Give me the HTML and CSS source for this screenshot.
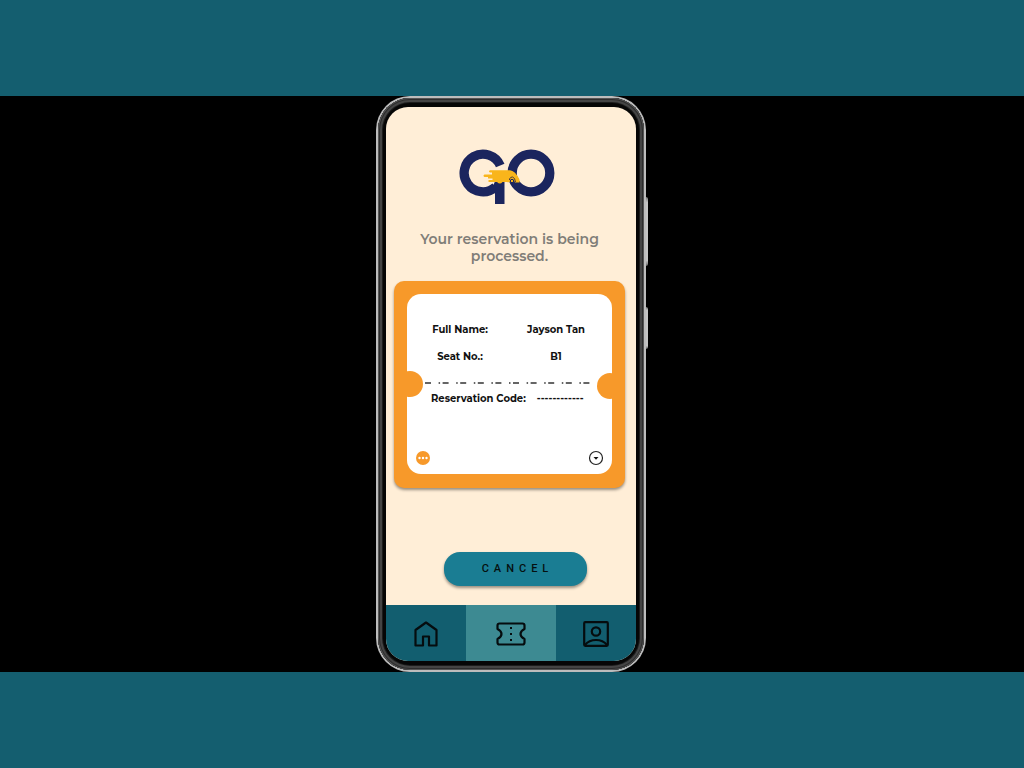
FILE: index.html
```html
<!DOCTYPE html>
<html lang="en">
<head>
<meta charset="utf-8">
<meta name="viewport" content="width=device-width, initial-scale=1">
<title>Reservation</title>
<link rel="stylesheet" href="styles.css">
</head>
<body>
<main class="stage">
  <div class="device">
    <span class="side-key side-key-volume"></span>
    <span class="side-key side-key-power"></span>
    <div class="rim"><div class="bezel"><div class="screen">
      <div class="content">
        <svg class="logo" viewBox="0 0 96 56" role="img" aria-label="GO">
          <g fill="none" stroke="#1b255e" stroke-width="9.300">
            <path d="M41.200 16.500A18.800 18.800 0 1 0 36.500 38"/>
            <circle cx="72" cy="24" r="18.800"/>
          </g>
          <path fill="#1b255e" d="M30 40Q35 37 36 32H45.500V55H36V42.500Q33 45 29 46z"/>
          <path fill="#f9b51b" d="M31 21.300H51Q56 22.500 58.500 27Q61 30 60.500 33.500H56Q55 30 52 31Q51 34 48 33H43.500Q41 36 38 33H30Q28.500 32 30 31H33.500V29.500H29V28H25.500Q23.500 26.500 25.500 25.500H33V23.500H31Q29 22.400 31 21.300z"/>
          <path fill="none" stroke="#4a3d3a" stroke-width="1" d="M50.500 31V30Q51.500 27.800 53.500 28Q56 28.500 56.500 33"/>
          <circle cx="53" cy="32" r="1.700" fill="#f9b51b" stroke="#1b255e" stroke-width="1"/>
        </svg>
        <h1 class="status">Your reservation is being processed.</h1>
        <section class="ticket">
          <div class="ticket-body">
            <span class="notch notch-left"></span>
            <span class="notch notch-right"></span>
            <dl class="details">
              <dt>Full Name:</dt><dd>Jayson Tan</dd>
              <dt>Seat No.:</dt><dd>B1</dd>
            </dl>
            <svg class="perforation" viewBox="0 0 172 2" aria-hidden="true"><path d="M0 1H172" stroke="#333" stroke-width="1.300" stroke-dasharray="6 7.600 1.500 2.500"/></svg>
            <dl class="code"><dt>Reservation Code:</dt><dd>------------</dd></dl>
            <div class="ticket-actions">
              <button type="button" class="icon-button" aria-label="More options">
                <svg viewBox="0 0 16 16"><circle cx="8" cy="8" r="7" fill="#f7992a"/><g fill="#fff"><circle cx="4.500" cy="8" r="1.200"/><circle cx="8" cy="8" r="1.200"/><circle cx="11.500" cy="8" r="1.200"/></g></svg>
              </button>
              <button type="button" class="icon-button" aria-label="Show details">
                <svg viewBox="0 0 16 16"><circle cx="8" cy="8" r="6.500" fill="#fff" stroke="#222" stroke-width="1.200"/><path d="M5.500 7H10.500L8 9.800z" fill="#111"/></svg>
              </button>
            </div>
          </div>
        </section>
        <button type="button" class="cancel">CANCEL</button>
      </div>
      <nav class="tabs" aria-label="Main">
        <a class="tab" href="#home" aria-label="Home">
          <svg width="24" height="26" viewBox="0 0 24 26"><path d="M1.500 24.500V9L12 1.500L22.500 9V24.500H15V15.500H9V24.500z"/></svg>
        </a>
        <a class="tab tab-active" href="#tickets" aria-label="Tickets" aria-current="page">
          <svg width="30" height="24" viewBox="0 0 30 24"><path d="M3.500 1.500H26.500Q28.500 1.500 28.500 3.500V7Q24.500 9 24.500 12T28.500 17V20.500Q28.500 22.500 26.500 22.500H3.500Q1.500 22.500 1.500 20.500V17Q5.500 15 5.500 12T1.500 7V3.500Q1.500 1.500 3.500 1.500z"/><path class="dots" d="M15 5v2M15 11v2M15 17v2"/></svg>
        </a>
        <a class="tab" href="#profile" aria-label="Profile">
          <svg width="26" height="26" viewBox="0 0 26 26"><rect x="1.200" y="1.200" width="23.600" height="23.600" rx="1"/><circle cx="13" cy="10.500" r="4.200"/><path d="M2 24Q6 19 13 19T24 24"/></svg>
        </a>
      </nav>
    </div></div></div>
  </div>
</main>
</body>
</html>
```
FILE: styles.css
```css
* { box-sizing: border-box; }

body {
  margin: 0;
  min-height: 100vh;
  display: flex;
  flex-direction: column;
  justify-content: center;
  background: #145e6f;
  color: #111;
  font-family: Montserrat, Inter, sans-serif;
}

h1, dl, dd { margin: 0; }

button { border: 0; padding: 0; cursor: pointer; }

.stage {
  display: flex;
  justify-content: center;
  background: #000;
}

/* Phone shell */
.device {
  position: relative;
  width: 272px;
  padding-right: 2px;
}

.rim {
  position: relative;
  padding: 2px;
  border-radius: 34px;
  background: #bcbcbc;
}

.bezel {
  padding: 9px 8px;
  border-radius: 32px;
  background: #060606;
  box-shadow: inset 0 0 0 1px #555, inset 0 0 0 2px #2c2c2c, inset 0 0 0 4px #444, inset 0 0 0 5px #1c1c1c;
}

.side-key {
  position: absolute;
  right: 0;
  width: 4px;
  border-radius: 2px;
  background: linear-gradient(#777, #c4c4c4 8%, #c4c4c4 92%, #666);
}

.side-key-volume { top: 101px; height: 69px; }
.side-key-power { top: 211px; height: 42px; }

.screen {
  display: flex;
  flex-direction: column;
  min-height: 554px;
  overflow: hidden;
  border-radius: 22px;
  background: #ffeed7;
}

.content {
  flex: 1;
  display: flex;
  flex-direction: column;
  align-items: center;
  padding: 42px 11px 19px 8px;
}

.logo {
  width: 96px;
  height: 56px;
  margin-right: 5px;
}

.status {
  max-width: 200px;
  margin-top: 26px;
  font-size: 14px;
  font-weight: 600;
  line-height: 17px;
  text-align: center;
  color: #7f7d78;
}

/* Ticket */
.ticket {
  align-self: stretch;
  margin-top: 16px;
  padding: 13px 13px 14px;
  border-radius: 10px;
  background: #f7992a;
  box-shadow: 0 2px 3px rgba(0, 0, 0, 0.4);
}

.ticket-body {
  position: relative;
  overflow: hidden;
  padding: 22px 0 8px;
  border-radius: 14px;
  background: #fff;
  font-size: 10px;
  font-weight: 700;
}

.notch {
  position: absolute;
  width: 26px;
  height: 26px;
  border-radius: 50%;
  background: #f7992a;
}

.notch-left { left: -10px; top: 77px; }
.notch-right { right: -11px; top: 79px; }

.details {
  display: grid;
  grid-template-columns: 106px 1fr;
  padding-right: 13px;
  line-height: 27px;
  text-align: center;
}

.perforation {
  display: block;
  width: 172px;
  height: 2px;
  margin: 12px 0 0 18px;
}

.code {
  display: flex;
  gap: 11px;
  margin-top: 7px;
  padding-left: 24px;
  line-height: 15px;
}

.ticket-actions {
  display: flex;
  justify-content: space-between;
  margin-top: 44px;
  padding: 0 8px;
}

.icon-button {
  width: 16px;
  height: 16px;
  background: none;
}

.icon-button svg { display: block; }

.cancel {
  width: 143px;
  height: 34px;
  margin: auto 0 0 12px;
  padding: 0 0 1px 4px;
  border-radius: 16px;
  background: #1a7d93;
  box-shadow: 0 2px 3px rgba(0, 0, 0, 0.4);
  color: #06100f;
  font-family: Roboto, sans-serif;
  font-size: 11px;
  font-weight: 500;
  letter-spacing: 5px;
}

/* Bottom navigation */
.tabs {
  display: grid;
  grid-template-columns: 8fr 9fr 8fr;
  height: 56px;
}

.tab {
  display: flex;
  align-items: center;
  justify-content: center;
  padding-top: 2px;
  background: #125e6f;
}

.tab-active { background: #3d8a92; }

.tab svg {
  fill: none;
  stroke: #050c0e;
  stroke-width: 2.2;
  stroke-linejoin: round;
}

.tab .dots { stroke-width: 2; }
```
